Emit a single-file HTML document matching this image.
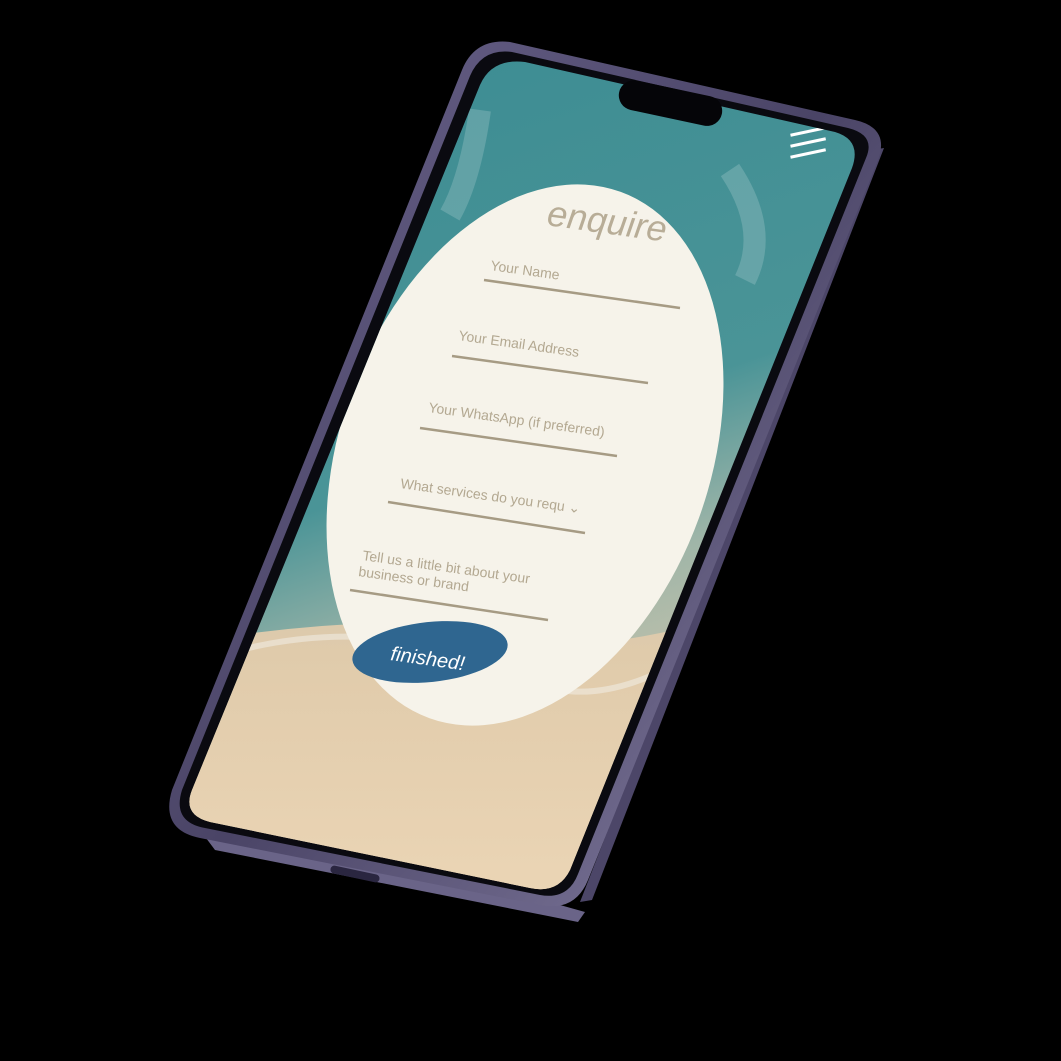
<!DOCTYPE html>
<html><head><meta charset="utf-8"><style>
html,body{margin:0;padding:0;background:#000;width:1061px;height:1061px;overflow:hidden}
svg{display:block}
text{font-family:"Liberation Sans",sans-serif}
</style></head><body>
<svg width="1061" height="1061" viewBox="0 0 1061 1061" xmlns="http://www.w3.org/2000/svg">
<defs>
<linearGradient id="frame" x1="0" y1="0" x2="1" y2="1">
<stop offset="0" stop-color="#6e6790"/><stop offset="0.5" stop-color="#4a4466"/><stop offset="1" stop-color="#8a84a8"/>
</linearGradient>
<linearGradient id="sea" x1="0" y1="0" x2="0.3" y2="1">
<stop offset="0" stop-color="#3a8b92"/><stop offset="0.55" stop-color="#4a9497"/><stop offset="0.72" stop-color="#9fb5a8"/><stop offset="1" stop-color="#e6cfae"/>
</linearGradient>
<linearGradient id="sand" x1="0" y1="0" x2="0" y2="1">
<stop offset="0" stop-color="#cfc6b0"/><stop offset="0.3" stop-color="#e0cbab"/><stop offset="1" stop-color="#ecd6b6"/>
</linearGradient>
<clipPath id="scr"><path d="M525,62 L835,132 Q862,140 852,168 L570,870 Q558,894 530,888 L210,822 Q182,815 192,790 L480,85 Q492,58 525,62 Z"/></clipPath>
</defs>
<!-- side band -->
<path d="M200,830 L560,905 L585,912 L578,922 L548,916 L215,850 Z" fill="#6a6488"/>
<path d="M872,150 L884,148 L592,900 L580,902 Z" fill="#4c4668"/>
<!-- outer frame -->
<path d="M510,42 Q475,38 462,70 L172,790 Q160,830 200,838 L540,905 Q575,912 588,880 L878,160 Q890,128 855,120 Z" fill="url(#frame)"/>
<path d="M512,52 Q482,48 470,76 L182,790 Q172,822 205,828 L540,895 Q568,900 578,874 L866,158 Q876,135 848,128 Z" fill="#0a0a10"/>
<!-- screen -->
<g clip-path="url(#scr)">
<rect x="150" y="40" width="760" height="880" fill="url(#sea)"/>
<path d="M150,650 Q400,600 620,640 Q760,620 900,540 L900,920 L150,920 Z" fill="url(#sand)"/>
<path d="M240,650 Q400,610 560,690 Q620,700 700,650" fill="none" stroke="#f4f2ec" stroke-width="6" opacity="0.5"/>
<path d="M480,110 Q470,180 450,215" fill="none" stroke="#e8f1ef" stroke-width="22" opacity="0.2"/>
<path d="M730,170 Q770,230 745,280" fill="none" stroke="#e8f1ef" stroke-width="22" opacity="0.2"/>
<ellipse cx="525" cy="455" rx="185" ry="280" transform="rotate(20 525 455)" fill="#f6f3ea"/>
<g fill="#fff"><rect x="790" y="130" width="36" height="3" transform="rotate(-12 808 131)"/><rect x="790" y="141" width="36" height="3" transform="rotate(-12 808 142)"/><rect x="790" y="152" width="36" height="3" transform="rotate(-12 808 153)"/></g>
</g>
<!-- island -->
<rect x="618" y="88" width="105" height="30" rx="15" transform="rotate(12 670 103)" fill="#050508"/>
<!-- text -->
<g fill="#b3a891" font-size="14">
<text x="546" y="225" font-size="36" font-style="italic" fill="#b8ad97" transform="rotate(8 546 225)" font-family="Liberation Serif,serif">enquire</text>
<text x="490" y="270" transform="rotate(8 490 270)">Your Name</text>
<text x="458" y="340" transform="rotate(8 458 340)">Your Email Address</text>
<text x="428" y="412" transform="rotate(8 428 412)">Your WhatsApp (if preferred)</text>
<text x="400" y="488" transform="rotate(8 400 488)">What services do you requ ⌄</text>
<text x="362" y="560" transform="rotate(8 362 560)">Tell us a little bit about your</text>
<text x="358" y="576" transform="rotate(8 358 576)">business or brand</text>
</g>
<g stroke="#a69b84" stroke-width="2.5">
<line x1="484" y1="280" x2="680" y2="308"/>
<line x1="452" y1="356" x2="648" y2="383"/>
<line x1="420" y1="428" x2="617" y2="456"/>
<line x1="388" y1="502" x2="585" y2="533"/>
<line x1="350" y1="590" x2="548" y2="620"/>
</g>
<ellipse cx="430" cy="652" rx="78" ry="30" transform="rotate(-6 430 652)" fill="#2f6690"/>
<text x="390" y="660" font-size="20" font-style="italic" fill="#fff" transform="rotate(8 390 660)" font-family="Liberation Serif,serif">finished!</text>
<g fill="#2a2640"><rect x="330" y="870" width="50" height="8" rx="4" transform="rotate(12 355 874)"/></g>
</svg>
</body></html>
